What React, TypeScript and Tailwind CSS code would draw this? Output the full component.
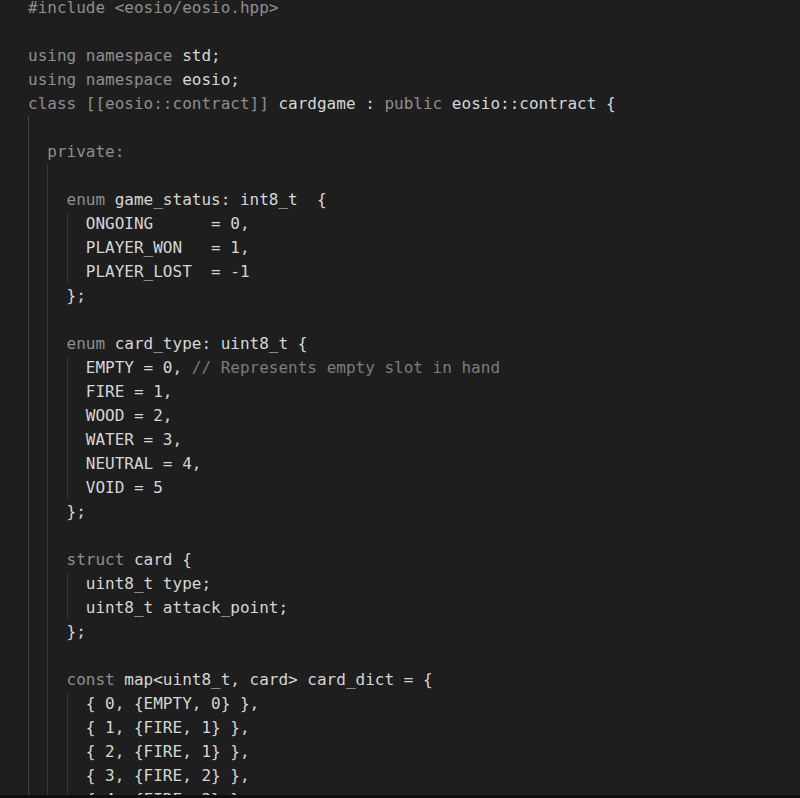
type Tok = [string, "k" | "i" | "c"];

interface Line {
  g: number;
  t: Tok[];
}

const k = (s: string): Tok => [s, "k"];
const i = (s: string): Tok => [s, "i"];
const c = (s: string): Tok => [s, "c"];

const lines: Line[] = [
  { g: 0, t: [k("#include <eosio/eosio.hpp>")] },
  { g: 0, t: [] },
  { g: 0, t: [k("using namespace "), i("std;")] },
  { g: 0, t: [k("using namespace "), i("eosio;")] },
  { g: 0, t: [k("class [[eosio::contract]] "), i("cardgame : "), k("public "), i("eosio::contract {")] },
  { g: 1, t: [] },
  { g: 1, t: [k("private:")] },
  { g: 2, t: [] },
  { g: 2, t: [k("enum "), i("game_status: int8_t  {")] },
  { g: 3, t: [i("ONGOING      = 0,")] },
  { g: 3, t: [i("PLAYER_WON   = 1,")] },
  { g: 3, t: [i("PLAYER_LOST  = -1")] },
  { g: 2, t: [i("};")] },
  { g: 2, t: [] },
  { g: 2, t: [k("enum "), i("card_type: uint8_t {")] },
  { g: 3, t: [i("EMPTY = 0, "), c("// Represents empty slot in hand")] },
  { g: 3, t: [i("FIRE = 1,")] },
  { g: 3, t: [i("WOOD = 2,")] },
  { g: 3, t: [i("WATER = 3,")] },
  { g: 3, t: [i("NEUTRAL = 4,")] },
  { g: 3, t: [i("VOID = 5")] },
  { g: 2, t: [i("};")] },
  { g: 2, t: [] },
  { g: 2, t: [k("struct "), i("card {")] },
  { g: 3, t: [i("uint8_t type;")] },
  { g: 3, t: [i("uint8_t attack_point;")] },
  { g: 2, t: [i("};")] },
  { g: 2, t: [] },
  { g: 2, t: [k("const "), i("map<uint8_t, card> card_dict = {")] },
  { g: 3, t: [i("{ 0, {EMPTY, 0} },")] },
  { g: 3, t: [i("{ 1, {FIRE, 1} },")] },
  { g: 3, t: [i("{ 2, {FIRE, 1} },")] },
  { g: 3, t: [i("{ 3, {FIRE, 2} },")] },
  { g: 3, t: [i("{ 4, {FIRE, 2} },")] },
];

const tone = {
  k: "text-[#8e8e8e]",
  i: "text-[#d6d6d6]",
  c: "text-[#7c7c7c]",
};

export default function App() {
  return (
    <div className="flex h-[798px] w-[800px] flex-col overflow-hidden bg-[#1e1e1e]">
      <div className="flex-1 overflow-hidden">
        <div className="-mt-1 pl-[28px] font-['DejaVu_Sans_Mono',monospace] text-[16px] leading-6">
          {lines.map((line, n) => (
            <div key={n} className="flex h-6 whitespace-pre">
              {Array.from({ length: line.g }).map((_, j) => (
                <span
                  key={j}
                  className={`inline-block h-6 w-[2ch] border-l ${j === 0 ? "border-[#444444]" : "border-[#383838]"}`}
                />
              ))}
              {line.t.map(([s, kind], j) => (
                <span key={j} className={tone[kind]}>
                  {s}
                </span>
              ))}
            </div>
          ))}
        </div>
      </div>
      <div className="h-[3px] bg-[#0e0e0e]" />
    </div>
  );
}
